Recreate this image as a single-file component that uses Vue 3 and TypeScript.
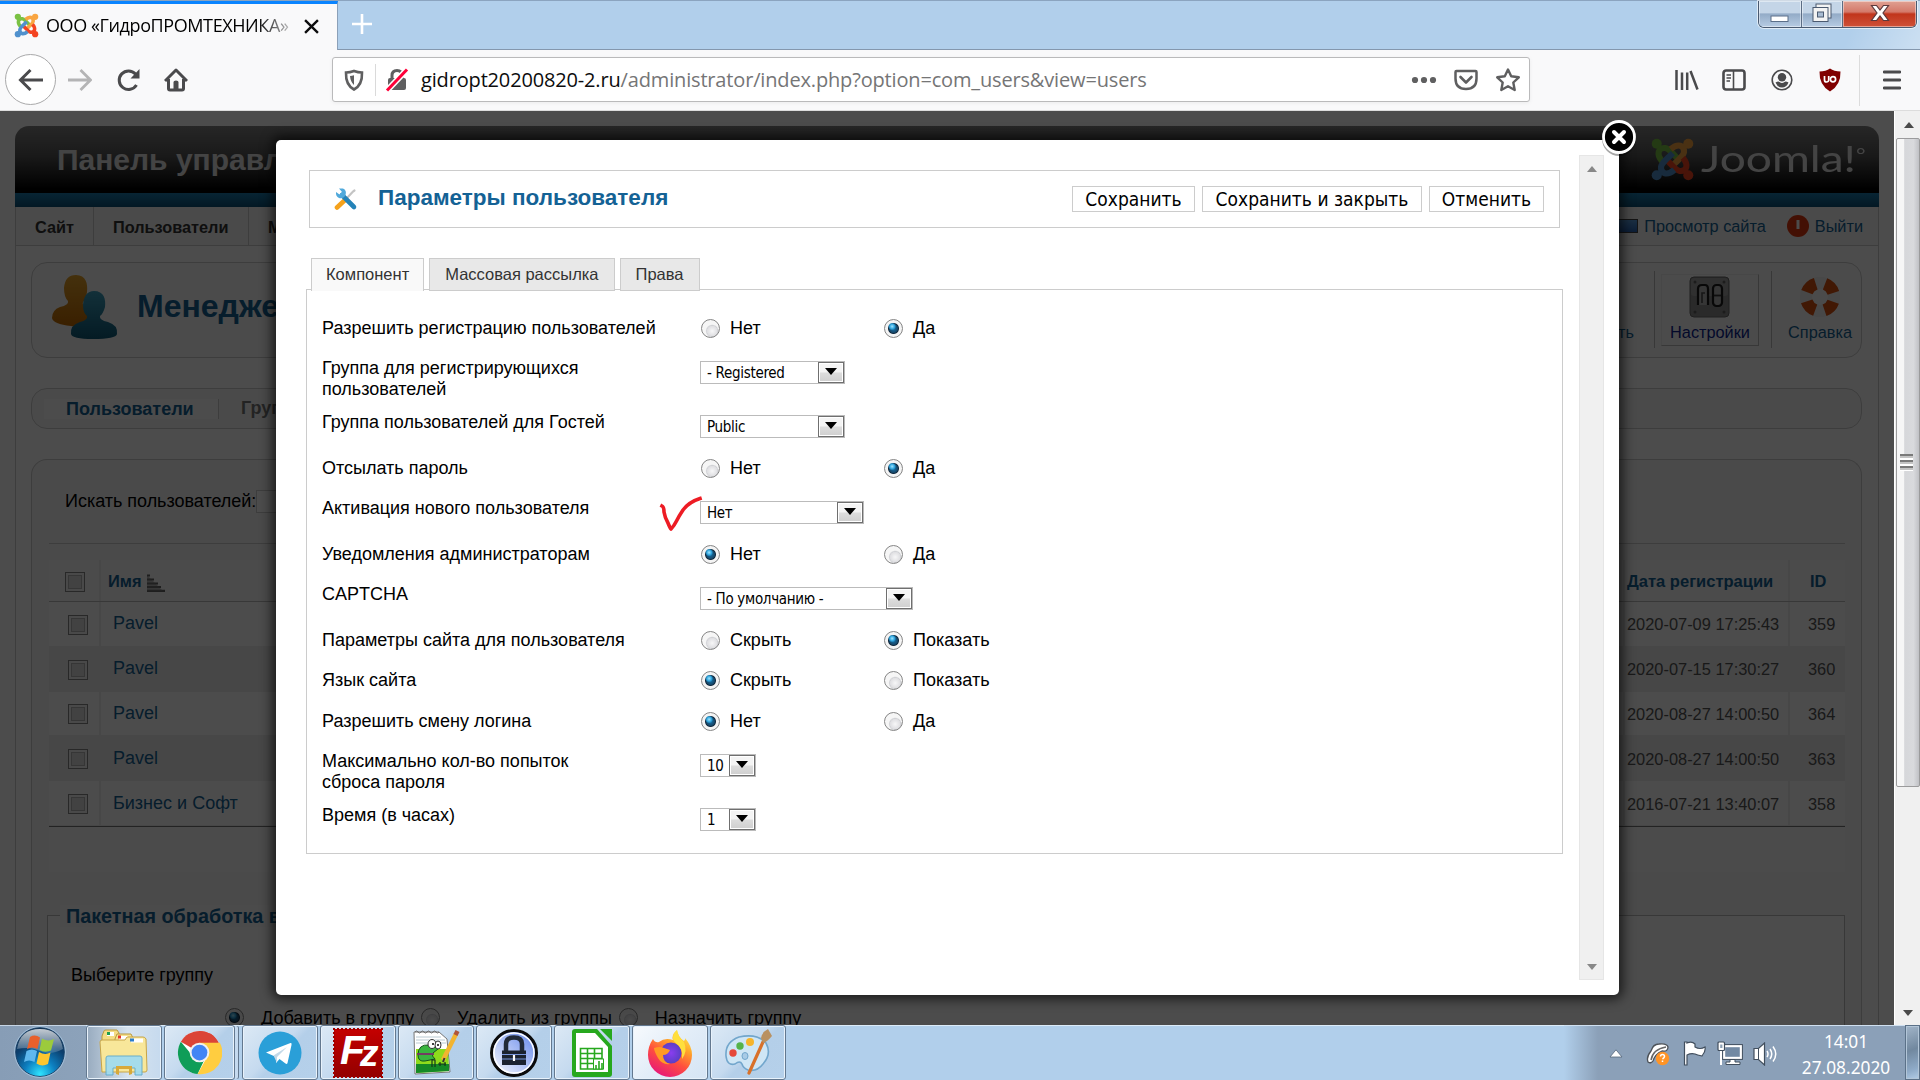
<script setup lang="ts">
interface RadioField { kind: 'radio'; label: string; height: number; options: string[]; checked: number }
interface SelectField { kind: 'select'; label: string; height: number; value: string; width: number; marked?: boolean }
type Field = RadioField | SelectField

const noYes = ['Нет', 'Да']
const hideShow = ['Скрыть', 'Показать']

const fields: Field[] = [
  { kind: 'radio', label: 'Разрешить регистрацию пользователей', height: 40, options: noYes, checked: 1 },
  { kind: 'select', label: 'Группа для регистрирующихся пользователей', height: 54, value: '- Registered', width: 145 },
  { kind: 'select', label: 'Группа пользователей для Гостей', height: 46, value: 'Public', width: 145 },
  { kind: 'radio', label: 'Отсылать пароль', height: 40, options: noYes, checked: 1 },
  { kind: 'select', label: 'Активация нового пользователя', height: 46, value: 'Нет', width: 164, marked: true },
  { kind: 'radio', label: 'Уведомления администраторам', height: 40, options: noYes, checked: 0 },
  { kind: 'select', label: 'CAPTCHA', height: 46, value: '- По умолчанию -', width: 213 },
  { kind: 'radio', label: 'Параметры сайта для пользователя', height: 40, options: hideShow, checked: 1 },
  { kind: 'radio', label: 'Язык сайта', height: 41, options: hideShow, checked: 0 },
  { kind: 'radio', label: 'Разрешить смену логина', height: 40, options: noYes, checked: 0 },
  { kind: 'select', label: 'Максимально кол-во попыток сброса пароля', height: 54, value: '10', width: 56 },
  { kind: 'select', label: 'Время (в часах)', height: 33, value: '1', width: 56 },
]

const users = [
  { name: 'Pavel', date: '2020-07-09 17:25:43', id: 359 },
  { name: 'Pavel', date: '2020-07-15 17:30:27', id: 360 },
  { name: 'Pavel', date: '2020-08-27 14:00:50', id: 364 },
  { name: 'Pavel', date: '2020-08-27 14:00:50', id: 363 },
  { name: 'Бизнес и Софт', date: '2016-07-21 13:40:07', id: 358 },
]

const batch = ['Добавить в группу', 'Удалить из группы', 'Назначить группу']
const tabs = ['Компонент', 'Массовая рассылка', 'Права']
const actions = ['Сохранить', 'Сохранить и закрыть', 'Отменить']
const leaf = 'M6.2 13C2.8 9 4 5.2 8 5.6C10.4 6 12 8.6 15.6 12.2'
const leaves = [
  { color: '#7ac143', turn: 0 },
  { color: '#f9a541', turn: 90 },
  { color: '#f44321', turn: 180 },
  { color: '#5091cd', turn: 270 },
]
</script>

<template>
  <div class="screen">
    <div class="titlebar">
      <div class="browser-tab">
        <svg class="favicon" viewBox="0 0 24 24">
          <g v-for="l in leaves" :key="l.turn" :transform="`rotate(${l.turn} 12 12)`">
            <circle cx="3.7" cy="3.7" r="3" :fill="l.color" />
            <path :d="leaf" fill="none" :stroke="l.color" stroke-width="3.4" />
          </g>
        </svg>
        <span class="tab-title">ООО «ГидроПРОМТЕХНИКА»</span>
        <svg class="tab-close" viewBox="0 0 14 14"><path d="M1 1L13 13M13 1L1 13" stroke="#0c0c0d" stroke-width="2.2" /></svg>
      </div>
      <svg class="new-tab" viewBox="0 0 22 22"><path d="M11 1V21M1 11H21" stroke="#fff" stroke-width="2.6" /></svg>
      <div class="window-buttons">
        <div class="wb min"><svg width="20" height="14" viewBox="0 0 20 14"><rect x="1" y="7" width="17" height="5.5" fill="#fff" stroke="#5b6f89" /></svg></div>
        <div class="wb max"><svg width="22" height="20" viewBox="0 0 22 20"><g fill="#f3f3f3" stroke="#4b5a70"><rect x="5" y="1" width="15" height="14" /><rect x="2" y="4.500" width="15" height="14" /><rect x="6.500" y="9" width="6" height="5" fill="#a9bcd2" /></g></svg></div>
        <div class="wb close"><svg width="20" height="18" viewBox="0 0 20 18"><path d="M1.500 1.500H6.500L10 6L13.500 1.500H18.500L13 9L18.500 16.500H13.500L10 12L6.500 16.500H1.500L7 9Z" fill="#fff" stroke="#5d3a3d" stroke-width="1.200" /></svg></div>
      </div>
    </div>

    <div class="navbar">
      <div class="back"><svg width="26" height="24" viewBox="0 0 26 24"><path d="M25 12H3M12.500 2L2.500 12L12.500 22" fill="none" stroke="#4a4a4c" stroke-width="3" /></svg></div>
      <svg class="nav-icon fwd" viewBox="0 0 24 24"><path d="M0 12H22M12.500 2L22.500 12L12.500 22" fill="none" stroke="#b4b4b5" stroke-width="2.800" /></svg>
      <svg class="nav-icon reload" viewBox="0 0 24 24"><path d="M19.500 17A9.300 9.300 0 1 1 18.500 6L21 9" fill="none" stroke="#4a4a4c" stroke-width="3" /><path d="M22.500 1V10.500H13.500Z" fill="#4a4a4c" /></svg>
      <svg class="nav-icon home" viewBox="0 0 24 24"><path d="M1 13L12 2L23 13M4.500 11V20.500Q4.500 22 6 22H18Q19.500 22 19.500 20.500V11" fill="none" stroke="#4a4a4c" stroke-width="3" stroke-linejoin="round" /><path d="M9.500 21V14Q9.500 12.500 12 12.500T14.500 14V21Z" fill="#4a4a4c" /></svg>
      <div class="urlbar">
        <svg class="shield" width="20" height="22" viewBox="0 0 20 22"><path d="M2 3.500Q6 3.500 10 2Q14 3.500 18 3.500Q18.500 16 10 20.500Q1.500 16 2 3.500Z" fill="none" stroke="#5f5f60" stroke-width="2.600" /><path d="M10 6.200Q8 6.800 6 7Q6.500 13 10 16Z" fill="#5f5f60" /></svg>
        <i class="url-sep"></i>
        <svg class="lock" width="24" height="24" viewBox="0 0 24 24"><rect x="3" y="10" width="18" height="12" rx="2" fill="#5f5f60" /><path d="M7 11V7.500Q7 2.500 12 2.500T17 7.500V11" fill="none" stroke="#5f5f60" stroke-width="3" /><path d="M2 22.500L22 1.500" stroke="#fff" stroke-width="6" /><path d="M2 22.500L22 1.500" stroke="#ff0039" stroke-width="3" /></svg>
        <span class="url"><b>gidropt20200820-2.ru</b>/administrator/index.php?option=com_users&amp;view=users</span>
        <svg class="dots" width="26" height="8" viewBox="0 0 26 8"><g fill="#5f5f60"><circle cx="4" cy="4" r="3.100" /><circle cx="13" cy="4" r="3.100" /><circle cx="22" cy="4" r="3.100" /></g></svg>
        <svg class="pocket" width="26" height="24" viewBox="0 0 26 24"><path d="M3.500 3H22.500Q23.500 3 23.500 4V10.500Q23.500 21 13 21T2.500 10.500V4Q2.500 3 3.500 3Z" fill="none" stroke="#5f5f60" stroke-width="2.500" /><path d="M7.500 9L13 14.500L18.500 9" fill="none" stroke="#5f5f60" stroke-width="2.600" stroke-linecap="round" stroke-linejoin="round" /></svg>
        <svg class="star" width="26" height="26" viewBox="0 0 26 26"><path d="M13 2.500L16.200 9.300L23.800 10.300L18.300 15.500L19.700 23L13 19.300L6.300 23L7.700 15.500L2.200 10.300L9.800 9.300Z" fill="none" stroke="#5f5f60" stroke-width="2.400" stroke-linejoin="round" /></svg>
      </div>
      <div class="tools">
        <svg width="24" height="22" viewBox="0 0 24 22"><path d="M1.500 1V21M7 3.500V21M12.200 3.500V21M15.500 2L22.500 20.500" fill="none" stroke="#4a4a4c" stroke-width="2.500" /></svg>
        <svg class="t-side" width="24" height="22" viewBox="0 0 24 22"><rect x="1.500" y="1.500" width="21" height="19" rx="2.500" fill="none" stroke="#4a4a4c" stroke-width="2.600" /><path d="M11.500 2V20" stroke="#4a4a4c" stroke-width="1.600" /><path d="M4.500 6H9M4.500 9H9M4.500 12H8" stroke="#4a4a4c" stroke-width="1.300" /></svg>
        <svg class="t-acc" width="22" height="22" viewBox="0 0 22 22"><circle cx="11" cy="11" r="9.800" fill="none" stroke="#4a4a4c" stroke-width="1.600" /><circle cx="11" cy="8.200" r="4.200" fill="#4a4a4c" /><path d="M4.500 13.500Q7.500 12 8.500 13Q11 15 13.500 13Q14.500 12 17.500 13.500Q15.500 18.500 11 18.500T4.500 13.500Z" fill="#4a4a4c" /></svg>
        <svg class="t-ubo" width="22" height="24" viewBox="0 0 22 24"><path d="M11 .5Q15 3.500 21.500 3.500Q22 17 11 23.500Q0 17 .5 3.500Q7 3.500 11 .5Z" fill="#800000" /><path d="M5.500 8V12Q5.500 14 7.500 14T9.700 12V8" fill="none" stroke="#fff" stroke-width="1.700" /><circle cx="14" cy="11.300" r="2.600" fill="none" stroke="#fff" stroke-width="1.700" /></svg>
        <i class="tool-sep"></i>
        <svg class="t-menu" width="18" height="20" viewBox="0 0 18 20"><path d="M1 2H17M1 10H17M1 18H17" stroke="#4a4a4c" stroke-width="2.800" stroke-linecap="round" /></svg>
      </div>
    </div>

    <div class="viewport">
      <div class="page">
        <div class="masthead">
          <span class="mast-title">Панель управления</span>
          <svg class="jicon" viewBox="0 0 24 24">
            <g v-for="l in leaves" :key="l.turn" :transform="`rotate(${l.turn} 12 12)`">
              <circle cx="3.200" cy="3.200" r="2.800" :fill="l.color" />
              <path :d="leaf" fill="none" :stroke="l.color" stroke-width="3.400" />
            </g>
          </svg>
          <span class="jword">Joomla!<sup>°</sup></span>
        </div>
        <div class="blueline"></div>
        <div class="menubar">
          <span class="mi first">Сайт</span><span class="mi second">Пользователи</span><span class="mi third">Материалы</span>
          <div class="status">
            <i class="monitor"></i><span class="preview">Просмотр сайта</span>
            <svg width="22" height="22" viewBox="0 0 22 22"><circle cx="11" cy="11" r="11" fill="#e2380f" /><path d="M11 5V14" stroke="#fff" stroke-width="3" /></svg>
            <span>Выйти</span>
          </div>
        </div>
        <div class="body">
          <div class="box toolbar">
            <svg class="people" width="68" height="66" viewBox="0 0 68 66">
              <defs>
                <linearGradient id="gold" x2="0" y2="1"><stop offset="0" stop-color="#e4a32c" /><stop offset="1" stop-color="#c06800" /></linearGradient>
                <linearGradient id="teal" x2="0" y2="1"><stop offset="0" stop-color="#3fa2c0" /><stop offset="1" stop-color="#0e5a78" /></linearGradient>
              </defs>
              <path d="M25 1C35 1 37 10 36 18Q35 26 32 28Q30 33 40 36Q50 39 49 50Q38 56 20 52Q2 50 1 44Q1 36 9 33Q18 31 17 27Q13 23 13 14Q14 1 25 1Z" fill="url(#gold)" />
              <path d="M43 17C53 17 55 25 54 33Q52 40 49 42Q48 46 57 48Q67 51 66 60Q65 65 42 65Q21 65 20 60Q19 51 29 48Q37 46 36 42Q32 39 32 31Q33 17 43 17Z" fill="url(#teal)" />
            </svg>
            <span class="page-title">Менеджер</span>
            <div class="tb-right">
              <span class="tb-cut">Удалить</span>
              <i class="tb-sep s1"></i>
              <div class="tb-item hover">
                <svg width="42" height="42" viewBox="0 0 42 42"><rect x="1" y="1" width="39" height="40" rx="4" fill="#8d8d8d" stroke="#6a6a6a" /><rect x="2" y="2" width="37" height="18" rx="3" fill="#a0a0a0" /><g fill="#606060"><circle cx="6" cy="6" r="1.500" /><circle cx="35" cy="6" r="1.500" /><circle cx="6" cy="36" r="1.500" /><circle cx="35" cy="36" r="1.500" /></g><path d="M9 29V13Q9 9 13 9H16Q19 9 19 13V29" fill="#b4b4b4" stroke="#1c1c1c" stroke-width="2.200" /><path d="M13 27V17H16" fill="none" stroke="#4a4a4a" stroke-width="1.600" /><rect x="24" y="9" width="9" height="21" rx="3.500" fill="#b4b4b4" stroke="#1c1c1c" stroke-width="2.200" /><path d="M25 19.500H32" stroke="#333" stroke-width="1.800" /></svg>
                <span class="active-link">Настройки</span>
              </div>
              <i class="tb-sep s2"></i>
              <div class="tb-item help">
                <svg width="42" height="42" viewBox="0 0 42 42"><circle cx="21" cy="21" r="14" fill="none" stroke="#f0f0f0" stroke-width="12" /><circle cx="21" cy="21" r="14" fill="none" stroke="#d9500f" stroke-width="12" stroke-dasharray="12.500 9.490" transform="rotate(19.500 21 21)" /></svg>
                <span>Справка</span>
              </div>
            </div>
          </div>
          <div class="box submenu"><span class="sub-active">Пользователи</span><span class="sub">Группы</span></div>
          <div class="box content">
            <div class="search"><span>Искать пользователей:</span><i></i></div>
            <div class="rule"></div>
            <div class="table">
              <div class="tr th">
                <div class="c0"><i class="cb"></i></div>
                <div class="c1">Имя<svg width="19" height="18" viewBox="0 0 19 18"><path d="M1 1.500H4M1 5.500H8M1 9.500H12M1 13H15M1 16.800H19" stroke="#666" stroke-width="2.200" /><path d="M1 1L17 17H1Z" fill="#777" opacity=".5" /></svg></div>
                <div class="c2">Дата регистрации</div><div class="c3">ID</div>
              </div>
              <div v-for="(u, n) in users" :key="u.id" class="tr" :class="{ alt: n % 2 }">
                <div class="c0"><i class="cb"></i></div><div class="c1">{{ u.name }}</div>
                <div class="c2">{{ u.date }}</div><div class="c3">{{ u.id }}</div>
              </div>
              <div class="tfoot"></div>
            </div>
            <div class="fieldset">
              <span class="legend">Пакетная обработка выбранных</span>
              <div class="choose">Выберите группу</div>
              <div class="batch">
                <template v-for="(b, n) in batch" :key="b"><i class="radio" :class="{ on: n === 0 }"></i><span>{{ b }}</span></template>
              </div>
            </div>
          </div>
        </div>
      </div>
      <div class="shade"></div>

      <div class="scroll">
        <i class="arrow up"></i>
        <div class="thumb"><i class="grip"></i></div>
        <i class="arrow down"></i>
      </div>

      <div class="modal">
        <div class="frame">
          <div class="head">
            <svg width="24" height="24" viewBox="0 0 24 24"><path d="M3 20.500L11 13" stroke="#f5a21c" stroke-width="4.600" stroke-linecap="round" /><path d="M13 11L19 4.500L20.500 3.500" stroke="#c4c4c4" stroke-width="2.200" stroke-linecap="round" /><path d="M8 8L20 20" stroke="#2583b8" stroke-width="4.600" stroke-linecap="round" /><path d="M5 1.500L8 5L5.500 7.500L2 5Q1.500 9.500 5 11Q9.500 12 11.500 8Q13 3 9 1.500Z" fill="#50a9db" /></svg>
            <h1>Параметры пользователя</h1>
            <div class="actions"><button v-for="a in actions" :key="a">{{ a }}</button></div>
          </div>
          <div class="tabs"><span v-for="(t, n) in tabs" :key="t" class="tab" :class="{ current: n === 0 }">{{ t }}</span></div>
          <div class="panel">
            <div v-for="f in fields" :key="f.label" class="row" :style="{ height: f.height + 'px' }">
              <div class="label">{{ f.label }}</div>
              <template v-if="f.kind === 'radio'">
                <label v-for="(o, n) in f.options" :key="o" class="opt"><i class="radio" :class="{ on: n === f.checked }"></i>{{ o }}</label>
              </template>
              <div v-else class="select" :style="{ width: f.width + 'px' }">
                <span>{{ f.value }}</span><i class="drop"></i>
                <svg v-if="f.marked" class="mark" width="46" height="38" viewBox="0 0 46 38"><path d="M4 10Q6 11 6 16Q7 22 10 27Q12 32 13 33Q16 30 18.500 25Q21 20 25 14Q31 6 42 2.500" fill="none" stroke="#ed1c24" stroke-width="3.600" stroke-linecap="square" stroke-linejoin="round" /></svg>
              </div>
            </div>
          </div>
        </div>
        <div class="inner-scroll"><i class="arrow up"></i><i class="arrow down"></i></div>
        <svg class="modal-close" width="40" height="42" viewBox="0 0 40 42"><circle cx="20" cy="22" r="17" fill="#000" opacity=".35" /><circle cx="20" cy="20" r="15.500" fill="#000" stroke="#fff" stroke-width="2.800" /><path d="M15 15L25 25M25 15L15 25" stroke="#fff" stroke-width="4" stroke-linecap="round" /></svg>
      </div>
    </div>

    <div class="taskbar">
      <div class="start">
        <svg width="52" height="52" viewBox="0 0 52 52">
          <defs>
            <radialGradient id="orb" cx=".5" cy=".95" r=".9"><stop offset="0" stop-color="#2fe4ff" /><stop offset=".35" stop-color="#0d7fc0" /><stop offset=".7" stop-color="#0c3f6e" /><stop offset="1" stop-color="#123150" /></radialGradient>
            <linearGradient id="gloss" x2="0" y2="1"><stop offset="0" stop-color="#fff" stop-opacity=".75" /><stop offset="1" stop-color="#fff" stop-opacity=".15" /></linearGradient>
          </defs>
          <circle cx="26" cy="26" r="24.500" fill="url(#orb)" stroke="#20466b" /><circle cx="26" cy="26" r="25.400" fill="none" stroke="#a9c8e2" stroke-width=".8" />
          <path d="M3 23Q6 3 26 3T49 23Q36 30 26 25T3 23Z" fill="url(#gloss)" />
          <path d="M16 11Q21 8 26 11.500L23.500 23Q18 20 13 23Z" fill="#e8602c" /><path d="M28 12.500Q34 16 40 13L37 24.500Q31 27 25.500 24Z" fill="#9ccb3c" /><path d="M12.500 25Q18 22 23 25L20.500 36Q15 33 10 36Z" fill="#5fb8ee" /><path d="M25 26Q31 29.500 36.500 26.500L34 38Q28 41 22.500 37.500Z" fill="#fdc62e" />
        </svg>
      </div>
      <div class="tasks">
        <div class="task">
          <svg width="50" height="50" viewBox="0 0 50 50">
            <path d="M3 8L5 3Q5 2 7 2H18L20 5V20H3Z" fill="#f4dc83" stroke="#b9983e" /><path d="M16 11L18 6H32L34 10V20H16Z" fill="#f7e28f" stroke="#b9983e" /><rect x="8" y="4" width="7" height="4" fill="#fff" /><rect x="8" y="4" width="3" height="3" fill="#1d9f50" /><rect x="20" y="8" width="9" height="4" fill="#fff" /><rect x="19" y="7.500" width="3" height="3" fill="#e53727" /><path d="M1 14Q1 12 3 12H26L28 9H44Q46 9 47 11L48 42Q48 44 46 44H3Z" fill="#f8e79a" stroke="#c7a548" /><rect x="32" y="10.500" width="12" height="4" fill="#fff" /><rect x="31" y="10.500" width="4" height="3" fill="#2a7ccc" />
            <path d="M7 47V30Q7 28 9 28H41Q43 28 43 30V47H36V40H14V47Z" fill="#9fdcf2" stroke="#5fa9cc" opacity=".92" /><path d="M17 46V38H33V46L30 47V41H20V47Z" fill="#d8a93a" />
          </svg>
        </div>
        <div class="task stacked">
          <svg width="45" height="45" viewBox="0 0 48 48"><circle cx="24" cy="24" r="23" fill="#fff" /><path d="M24 24L4.100 12.500A23 23 0 0 1 43.900 12.500Z" fill="#db4437" /><path d="M24 1A23 23 0 0 1 43.900 12.500L45.700 16H24Z" fill="#db4437" /><path d="M4.100 12.500A23 23 0 0 0 22 47L31 28H17Z" fill="#0f9d58" /><path d="M24 13.500H45.700A23 23 0 0 1 22 47L32.500 28Z" fill="#ffcd40" /><circle cx="24" cy="24" r="10.500" fill="#f1f1f1" /><circle cx="24" cy="24" r="8.400" fill="#4285f4" /></svg>
        </div>
        <div class="task"><svg width="44" height="44" viewBox="0 0 44 44"><circle cx="22" cy="22" r="21.500" fill="#2a9fd8" /><path d="M8 21.500L32.500 12Q34 11.500 33.500 14L29.500 32Q29 33.500 27.500 32.500L21.500 28L18 32V26Z" fill="#fff" /><path d="M15.500 24.500L29 16L19 26V32Z" fill="#c3d9e8" /></svg></div>
        <div class="task"><div class="fz"><span>F</span><span class="z">z</span></div></div>
        <div class="task">
          <svg width="50" height="48" viewBox="0 0 50 48"><path d="M3 3H28L36 10L39 43L4 45Z" fill="#fff" stroke="#777" /><path d="M4 3Q5.500 1 7 3T10 3T13 3T16 3T19 3T22 3T25 3T28 3" fill="none" stroke="#666" /><path d="M5 8H30M5 11H34M5 14H35" stroke="#b9cad3" /><path d="M5 20H37L38 42L5 44Z" fill="#8edb1c" /><path d="M5 35H38L38 42L5 44Z" fill="#158926" /><path d="M7 26Q7 15 18 16Q24 13 27 20L22 24Q20 27 24 30L14 32Q7 33 7 26Z" fill="#39b53f" stroke="#14551c" /><ellipse cx="21" cy="15" rx="4" ry="4.500" fill="#fff" stroke="#333" /><ellipse cx="27" cy="16" rx="3" ry="4" fill="#fff" stroke="#333" /><circle cx="22" cy="15" r="1" /><circle cx="27" cy="16" r="1" /><path d="M6 25H23" stroke="#743d62" stroke-width="2" /><path d="M21 38V31H24V38M27 35H35M29 33V37M34 33V37" stroke="#16351a" stroke-width="1.200" fill="none" /><path d="M32 31L45 5" stroke="#f2b430" stroke-width="4.500" /><path d="M44.500 6L46.500 2" stroke="#b0553a" stroke-width="4.500" /><path d="M33.500 29L32 33" stroke="#333" stroke-width="2" /></svg>
        </div>
        <div class="task">
          <svg width="50" height="50" viewBox="0 0 50 50"><defs><linearGradient id="kp" x1="0" y1="1" x2="1" y2="0"><stop offset="0" stop-color="#fff" /><stop offset="1" stop-color="#5d82ea" /></linearGradient></defs><circle cx="25" cy="25" r="22.500" fill="url(#kp)" stroke="#0b0b0b" stroke-width="3" /><circle cx="25" cy="25" r="20" fill="none" stroke="#fff" stroke-width="1.400" /><path d="M17 23V16Q17 9.500 25 9.500T33 16V23" fill="none" stroke="#222a38" stroke-width="4.500" /><path d="M13 22.500H37V37H13Z" fill="#1b2230" /><path d="M13 26.500H37M13 31H37" stroke="#7895dd" stroke-width="1.200" /><path d="M25 27V33" stroke="#fff" stroke-width="2.200" /></svg>
        </div>
        <div class="task">
          <svg width="42" height="50" viewBox="0 0 42 50"><path d="M4 1H26L41 18V46Q41 49 38 49H4Q1 49 1 46V4Q1 1 4 1Z" fill="#27a81e" /><path d="M5 5H24L37 19V44H5Z" fill="#fff" /><path d="M29 1H41V13Z" fill="#27a81e" /><path d="M9.500 20.500H31V41H9.500ZM9.500 25.500H31M9.500 30.500H31M9.500 35.500H31M16.500 20.500V41M23.500 20.500V41" fill="none" stroke="#27a81e" stroke-width="1.600" /><rect x="22.500" y="31" width="10" height="10" fill="#fff" stroke="#27a81e" /><path d="M25 41V37M28 41V33M31 41V35" stroke="#27a81e" stroke-width="1.600" /></svg>
        </div>
        <div class="task focus">
          <svg width="48" height="48" viewBox="0 0 48 48"><defs><linearGradient id="ff" x1=".8" y1="0" x2=".25" y2="1"><stop offset="0" stop-color="#fff14f" /><stop offset=".3" stop-color="#ffa52a" /><stop offset=".6" stop-color="#ff4f3e" /><stop offset="1" stop-color="#e5147d" /></linearGradient><radialGradient id="fp"><stop offset="0" stop-color="#8a3df0" /><stop offset="1" stop-color="#5a3fc4" /></radialGradient></defs><path d="M7 10Q9 14 13 13Q19 8 27 11Q25 6 31 1Q32 8 38 12Q40 10 39 9Q46 17 46 26A22 22 0 0 1 2 26Q2 17 7 10Z" fill="url(#ff)" /><circle cx="25" cy="24" r="10.500" fill="url(#fp)" /><path d="M8 19Q14 17 18 19L24 21Q22 26 17 26Q17 33 24 35Q16 36 12 29T8 19Z" fill="#ff9a24" /><path d="M31 1Q32 8 38 13Q42 22 36 30Q37 20 32 16Q26 11 27 9Q27 4 31 1Z" fill="#ffdf3c" /></svg>
        </div>
        <div class="task">
          <svg width="50" height="50" viewBox="0 0 50 50"><path d="M3 28Q2 14 16 9Q34 5 43 15Q49 26 40 36Q34 44 25 42Q20 40 19 36Q17 32 12 36Q4 38 3 28Z" fill="#cfe6f5" stroke="#72a6cc" stroke-width="1.600" /><ellipse cx="22" cy="28" rx="3" ry="3.500" fill="#a8cbe6" stroke="#72a6cc" /><circle cx="10" cy="25" r="3.700" fill="#e5483a" /><circle cx="17" cy="18" r="3.700" fill="#56b34a" /><circle cx="27" cy="14" r="4" fill="#f6b42b" /><path d="M26 45L40 14" stroke="#d8712a" stroke-width="3.200" stroke-linecap="round" /><path d="M38 10Q39 4 45 1L49 8Q44 14 40 15Z" fill="#b99162" /></svg>
        </div>
      </div>
      <div class="tray">
        <svg class="tr-up" width="14" height="9" viewBox="0 0 14 9"><path d="M7 .8L13 8H1Z" fill="#fff" stroke="#53657a" stroke-width=".8" /></svg>
        <svg class="tr-a" width="24" height="24" viewBox="0 0 24 24"><path d="M2 20Q0 15 5 9Q7 2 13 2Q21 1 22 5Q22 10 16 9Q9 12 7 19Q5 22 2 20Z" fill="#fff" stroke="#4d5258" stroke-width="1.300" /><path d="M5 18Q7 7 20 5" stroke="#666" fill="none" stroke-width="1.500" /><circle cx="16.500" cy="16.500" r="6.700" fill="#ff9426" /><path d="M14.500 14.500Q14.500 12.500 16.500 12.500T18.500 14.500Q18.500 15.700 16.500 17M16.500 18.500V20" fill="none" stroke="#fff" stroke-width="1.500" /></svg>
        <svg class="tr-b" width="24" height="25" viewBox="0 0 24 25"><path d="M4 2Q9 0 12 3V6Q17 9 22 6Q23 10 19 15Q14 14 12 13Q8 12 4 14V24H1.500V1H4Z" fill="#fff" stroke="#414e5d" stroke-width="1.200" /></svg>
        <svg class="tr-c" width="26" height="25" viewBox="0 0 26 25"><rect x="7" y="5" width="17" height="12" fill="#7289a3" stroke="#fff" stroke-width="2.400" /><rect x="5.600" y="3.600" width="19.800" height="14.800" fill="none" stroke="#414e5d" /><path d="M13 18.500V21H9V23.500H23V21H18V18.500Z" fill="#fff" stroke="#414e5d" /><path d="M4 8V24" stroke="#fff" stroke-width="2" /><rect x="1" y="1" width="6.500" height="8.500" rx="1" fill="#fff" stroke="#414e5d" stroke-width="1.200" /><rect x="3.200" y="3.500" width="2.200" height="3.500" fill="#8da1b5" /></svg>
        <svg class="tr-d" width="25" height="24" viewBox="0 0 25 24"><path d="M1 6.500H5.500L11.500 1V23L5.500 17.500H1Z" fill="#fff" stroke="#414e5d" stroke-width="1.200" /><path d="M5.500 6.500V17.500" stroke="#414e5d" /><path d="M14 9Q16 12 14 15M17 7Q20.500 12 17 17M20 4.500Q25.500 12 20 19.500" fill="none" stroke="#fff" stroke-width="1.500" /></svg>
        <div class="clock"><span>14:01</span><span>27.08.2020</span></div>
        <i class="show-desktop"></i>
      </div>
    </div>
  </div>
</template>

<style>
body { margin: 0; overflow: hidden; }
</style>

<style scoped>
* { box-sizing: border-box; }
svg { display: block; flex: none; }
i { display: block; flex: none; }
.screen { width: 1920px; height: 1080px; display: flex; flex-direction: column; overflow: hidden; font-family: "Liberation Sans", Arial, sans-serif; color: #000; }

.titlebar { height: 50px; flex: none; display: flex; background: linear-gradient(115deg, transparent 96%, rgba(255,255,255,.35) 100%), #b1cfeb; border-bottom: 1px solid #8497ad; border-top: 1px solid #8ba4bf; }
.browser-tab { width: 338px; height: 49px; background: #f9f9fa; border-top: 3px solid #0a84ff; border-right: 1px solid #8ba0b8; display: flex; align-items: center; padding-left: 14px; }
.favicon { width: 25px; height: 25px; margin-top: -3px; }
.tab-title { margin-left: 7px; width: 246px; overflow: hidden; white-space: nowrap; font: 18px/28px "Open Sans", sans-serif; letter-spacing: -.4px; margin-top: -4px; -webkit-mask-image: linear-gradient(90deg, #000 86%, rgba(0,0,0,.3) 98%); mask-image: linear-gradient(90deg, #000 86%, rgba(0,0,0,.3) 98%); }
.tab-close { width: 15px; height: 15px; margin-left: 12px; margin-top: -2px; }
.new-tab { width: 22px; height: 22px; margin: 12px 0 0 13px; }
.window-buttons { margin-left: auto; margin-right: 3px; display: flex; width: 159px; height: 27px; border: 1px solid #4a5a70; border-top: 0; border-radius: 0 0 6px 6px; overflow: hidden; box-shadow: 0 0 0 1px rgba(255,255,255,.6); }
.wb { display: flex; align-items: center; justify-content: center; padding-bottom: 2px; background: linear-gradient(#c4d5e7 45%, #93abc7 50%, #b7cce3); border-right: 1px solid #5c6d84; box-shadow: inset 0 0 0 1px rgba(255,255,255,.45); }
.min { width: 43px; padding-top: 6px; }
.max { width: 41px; }
.close { flex: 1; border: 0; background: linear-gradient(#e0a193 0, #d4796a 42%, #c1351c 50%, #cf5138); }

.navbar { height: 61px; flex: none; background: #f9f9fa; border-bottom: 1px solid #dcdcdc; display: flex; align-items: center; }
.back { width: 51px; height: 51px; margin-left: 5px; margin-top: -1px; border: 1px solid #a9a9aa; border-radius: 50%; background: #fff; display: flex; align-items: center; justify-content: center; }
.nav-icon { width: 24px; height: 24px; }
.fwd { margin-left: 12px; }
.reload { margin-left: 25px; }
.home { margin-left: 23px; }
.urlbar { margin-left: 144px; margin-top: -1px; width: 1198px; height: 45px; background: #fff; border: 1px solid #bababb; border-radius: 3px; box-shadow: 0 1px 4px rgba(0,0,0,.06); display: flex; align-items: center; }
.shield { margin-left: 11px; }
.url-sep { width: 1px; height: 32px; background: #dadada; margin-left: 11px; }
.lock { margin-left: 9px; }
.url { margin-left: 12px; margin-top: 1px; font: 20px/30px "Open Sans", sans-serif; letter-spacing: -.16px; color: #757576; white-space: nowrap; width: 985px; }
.url b { font-weight: 400; color: #0c0c0d; }
.dots { margin-left: 5px; }
.pocket { margin-left: 16px; }
.star { margin-left: 16px; }
.tools { margin-left: auto; display: flex; align-items: center; height: 52px; margin-right: 19px; }
.t-side { margin-left: 23px; }
.t-acc { margin-left: 25px; }
.t-ubo { margin-left: 26px; }
.tool-sep { width: 1px; height: 51px; margin-left: 18px; background: #dcdcdc; }
.t-menu { margin-left: 23px; }

.viewport { height: 914px; flex: none; position: relative; overflow: hidden; display: flex; background: #fff; }
.page { width: 1894px; height: 914px; padding: 15px 15px 0; overflow: hidden; }
.shade { position: absolute; left: 0; top: 0; width: 1894px; height: 914px; background: rgba(0,0,0,.7); }
.masthead { height: 67px; border-radius: 14px 14px 0 0; background: linear-gradient(#828282, #555 45%, #000 95%); display: flex; align-items: center; color: #e4e4e4; }
.mast-title { margin-left: 42px; font-size: 30px; line-height: 34px; font-weight: 700; width: 1550px; }
.jicon { width: 43px; height: 43px; margin-left: 44px; }
.jword { font: 400 36px/50px Lato, sans-serif; margin-left: 7px; margin-top: -4px; white-space: nowrap; transform: scaleX(1.28); transform-origin: 0 50%; }
.jword sup { font-size: 18px; line-height: 0; vertical-align: 11px; }
.blueline { height: 14px; background: linear-gradient(#1c7cae, #0b5178); }
.menubar { height: 39px; border: 1px solid #ccc; border-width: 0 1px 1px; background: #f7f7f7; display: flex; font-size: 16.3px; font-weight: 700; line-height: 40px; color: #333; }
.mi { border-right: 1px solid #ccc; padding-left: 19px; }
.first { width: 78px; }
.second { width: 155px; }
.third { border: 0; }
.status { margin-left: auto; display: flex; align-items: center; font-weight: 400; color: #146295; padding-right: 15px; height: 37px; }
.status svg { margin: 0 6px 0 21px; }
.monitor { width: 22px; height: 14px; background: linear-gradient(#5a9ee0, #2a65b5); border: 1px solid #444; margin-right: 6px; }
.body { border: 1px solid #ccc; border-width: 0 1px; background: #fff; padding: 16px 16px 0 15px; height: 900px; }
.box { border: 1px solid #ccc; border-radius: 16px; background: #fbfbfb; }
.toolbar { height: 96px; display: flex; }
.people { margin: 11px 0 0 19px; }
.page-title { font-size: 32px; line-height: 38px; font-weight: 700; color: #146295; margin: 24px 0 0 18px; }
.tb-right { margin-left: auto; display: flex; margin-top: 8px; color: #146295; font-size: 16.300px; }
.tb-cut { margin-top: 51px; line-height: 20px; }
.tb-sep { width: 1px; height: 77px; background: #bbb; }
.s1 { margin-left: 20px; }
.s2 { margin-left: 12px; }
.tb-item { display: flex; flex-direction: column; align-items: center; line-height: 20px; height: 72px; margin-top: 3px; padding-top: 2px; }
.tb-item svg { margin-bottom: 4px; }
.hover { width: 98px; margin-left: 6px; border: 1px solid #eee; border-right-color: #bbb; border-bottom-color: #bbb; padding-top: 1px; }
.active-link { color: #0a1f8f; }
.help { width: 96px; margin-right: -7px; }
.submenu { height: 41px; margin-top: 30px; display: flex; align-items: center; font-size: 18px; font-weight: 700; background: #f9f9f9; }
.sub-active { margin-left: 12px; width: 175px; height: 20px; line-height: 20px; padding-left: 22px; background: #fff; border-right: 1px solid #ccc; color: #146295; }
.sub { margin-left: 22px; color: #777; }
.content { margin-top: 30px; height: 700px; border-radius: 16px 16px 0 0; background: #f8f8f8; border-bottom: 0; padding: 30px 16px 0 17px; }
.search { display: flex; align-items: center; height: 23px; padding-left: 16px; font-size: 18px; letter-spacing: -.02px; white-space: nowrap; }
.search i { width: 200px; height: 23px; border: 1px solid #ccc; background: #fff; }
.rule { height: 1px; background: #ccc; margin-top: 30px; }
.table { margin-top: 16px; width: 1796px; }
.tr { height: 44.800px; display: flex; background: #fff; color: #555; font-size: 16.400px; border-bottom: 1px solid #ededed; }
.tr.alt { background: #eee; }
.tr > div { display: flex; align-items: center; padding-top: 2px; }
.tr .c0 { width: 52px; border-right: 2px solid #eee; padding-left: 19px; }
.tr .c1 { flex: 1; border-right: 2px solid #eee; color: #146295; padding: 0 0 0 12px; font-size: 18px; }
.tr .c2 { width: 165px; padding-left: 2px; border-right: 2px solid #eee; }
.tr .c3 { width: 55px; padding-left: 18px; }
.th { height: 42px; background: #fbfbfb; border-bottom: 1px solid #bbb; font-weight: 700; color: #146295; }
.th .c0 { padding-left: 16px; }
.th .c1 { padding: 1px 0 0 7px; font-size: 16.400px; }
.th .c1 svg { margin: 3px 0 0 5px; }
.th .c2 { font-size: 16.550px; }
.th .c3 { padding-left: 20px; }
.cb { width: 20px; height: 20px; background: #dcdcdc; border: 1px solid #888; box-shadow: inset 0 0 0 2px #f4f4f4, inset 0 0 0 3px #b5b5b5; }
.tfoot { height: 46px; border-top: 1px solid #777; background: #fafafa; }
.fieldset { margin: 43px 0 0 -2px; width: 1798px; height: 200px; border: 1px solid #bbb; background: #fff; }
.legend { display: block; width: 300px; margin: -11px 0 0 12px; padding-left: 6px; background: #fafafa; font-size: 19.800px; font-weight: 700; line-height: 22px; color: #146295; white-space: nowrap; }
.choose { margin: 37px 0 0 23px; font-size: 18px; line-height: 22px; }
.batch { display: flex; align-items: center; margin: 20px 0 0 177px; font-size: 18px; line-height: 24px; white-space: nowrap; }
.batch span { margin: 0 7px 0 17px; }

.radio { width: 19px; height: 19px; border: 1px solid #858585; border-radius: 50%; background: radial-gradient(circle at 60% 65%, #f7f7f8 0, #dfdfe2 5px, #cfd0d4 5.500px, #f6f6f6 6.800px, #f6f6f6 8px); }
.radio.on { background: radial-gradient(circle at 42% 38%, #9fe4ff 0, #2da3dc 2.500px, transparent 4px), radial-gradient(circle at 50% 50%, #1673ab 0, #16496c 4px, #122b40 5px, #f4f4f4 6px, #f4f4f4 8px); }

.scroll { width: 26px; background: #f0f0f0; border-left: 1px solid #fff; display: flex; flex-direction: column; align-items: center; position: relative; }
.arrow { width: 0; height: 0; border: 5.500px solid transparent; }
.arrow.up { border-top: 0; border-bottom: 6px solid #4a4a4a; }
.arrow.down { border-bottom: 0; border-top: 6px solid #4a4a4a; }
.scroll .up { margin: 11px 0 10px 2px; }
.thumb { width: 24px; height: 649px; background: linear-gradient(90deg, #f6f6f6 30%, #d6d7da 35%, #d9dadd 75%, #c0c1c5); border: 1px solid #9b9b9c; border-radius: 2px; display: flex; align-items: center; justify-content: center; }
.grip { width: 13px; height: 17px; margin-right: 2px; background: repeating-linear-gradient(#7a7a7a 0 1.500px, #c4c4c4 2px 4px, #fff 4.500px 6px); }
.scroll .down { margin: auto 0 9px 1px; }

.modal { position: absolute; left: 276px; top: 29px; width: 1343px; height: 855px; background: #fff; border-radius: 5px; box-shadow: 0 0 12px 4px rgba(0,0,0,.65); display: flex; justify-content: space-between; padding: 15px 15px 15px 30px; }
.frame { width: 1257px; padding-top: 15px; }
.head { margin-left: 3px; width: 1251px; height: 58px; border: 1px solid #ccc; display: flex; padding: 15px 15px 0 24px; }
.head svg { margin-top: 1px; }
.head h1 { margin: -1px 0 0 20px; font-size: 22.500px; line-height: 26px; font-weight: 700; color: #146295; white-space: nowrap; }
.actions { margin-left: auto; display: flex; gap: 7px; }
.actions button { height: 26px; padding: 0; border: 1px solid #ccc; background: #fff; font: 19px/24px "DejaVu Sans Condensed", "DejaVu Sans", sans-serif; font-stretch: condensed; letter-spacing: .02px; color: #000; white-space: nowrap; }
.actions button:nth-child(1) { width: 123px; }
.actions button:nth-child(2) { width: 220px; }
.actions button:nth-child(3) { width: 115px; }
.tabs { margin-top: 30px; padding-left: 5px; display: flex; gap: 5px; height: 33px; margin-bottom: -2px; position: relative; }
.tab { border: 1px solid #ccc; background: #e8e8e8; font-size: 16.500px; line-height: 30px; color: #333; padding: 0 15px; white-space: nowrap; }
.tab.current { background: #f9f9f9; border-bottom: 0; padding: 0 14px; }
.panel { width: 1257px; height: 565px; border: 1px solid #ccc; padding: 27px 0 0 15px; }
.row { display: flex; align-items: flex-start; }
.label { width: 378px; padding-right: 80px; padding-top: 1px; flex: none; font-size: 18px; line-height: 21px; }
.row:first-child .label { padding-right: 0; }
.row:nth-child(8) .label { padding-right: 0; }
.opt { width: 183px; height: 21px; margin-top: 1px; display: flex; align-items: center; gap: 10px; font-size: 18px; line-height: 21px; padding-left: 1px; }
.opt .radio { margin-top: -1px; }
.select { margin-top: 4px; height: 23px; border: 1px solid #bbb; display: flex; align-items: center; justify-content: space-between; padding-left: 6px; font: 15px/20px "DejaVu Sans Condensed", "DejaVu Sans", sans-serif; font-stretch: condensed; letter-spacing: -.3px; position: relative; white-space: nowrap; }
.drop { width: 26px; height: 21px; border: 1px solid #6f6f6f; background: linear-gradient(#f4f4f4 45%, #dcdcdc 55%, #cfcfcf); box-shadow: inset 0 0 0 1px #fff; display: flex; align-items: center; justify-content: center; }
.drop::before { content: ""; border: 6px solid transparent; border-top: 7px solid #000; border-bottom: 0; margin-top: -2px; }
.mark { position: absolute; left: -43px; top: -6px; }
.inner-scroll { width: 25px; background: #f0f0f0; border: 1px solid #e6e6e6; display: flex; flex-direction: column; align-items: center; justify-content: space-between; padding: 10px 0 9px; }
.inner-scroll .arrow.up { border-bottom-color: #888; }
.inner-scroll .arrow.down { border-top-color: #888; }
.modal-close { position: absolute; right: -20px; top: -23px; }

.taskbar { height: 55px; flex: none; display: flex; background: #b1cfeb; box-shadow: inset 0 1px 0 #dcebf8; }
.start { width: 86px; background: linear-gradient(90deg, #879db6, #8ca2ba); padding: 1px 0 0 14px; box-shadow: inset 0 1px 0 #c6d5e5; }
.tasks { display: flex; gap: 2px; }
.task { width: 76px; height: 55px; border: 1px solid #63788f; border-radius: 3px; background: linear-gradient(135deg, #dce9f5 0, #c5daef 45%, #b4cfe9 55%, #b5d0ea); box-shadow: inset 0 0 0 1px #e8f2fb; display: flex; align-items: center; justify-content: center; }
.task:first-child { background: linear-gradient(90deg, #98abbf, #d6e3ef 55%, #c6daee); }
.task.stacked { width: 71px; margin-right: 5px; box-shadow: inset 0 0 0 1px #e8f2fb, 4px 0 0 -1px #c5daef, 5px 0 0 -1px #63788f; }
.task.focus { background: linear-gradient(135deg, #f7fafd, #e2edf8 50%, #d5e4f4); }
.fz { width: 48px; height: 48px; background: linear-gradient(#c40000, #930000); outline: 2px dotted #a00000; outline-offset: -1px; color: #fff; font: italic 700 41px/42px "Liberation Sans", sans-serif; display: flex; padding-left: 6px; }
.fz .z { font-size: 37px; line-height: 49px; margin-left: -5px; }
.tray { margin-left: auto; display: flex; width: 356px; background: linear-gradient(90deg, #b1cfeb, #8ba0b8 34px, #8ba0b8); box-shadow: inset 0 1px 0 #d0e0f0; }
.tr-up { margin: 24px 0 0 45px; }
.tr-a { margin: 17px 0 0 23px; }
.tr-b { margin: 16px 0 0 13px; }
.tr-c { margin: 16px 0 0 10px; }
.tr-d { margin: 17px 0 0 10px; }
.clock { width: 112px; margin-left: 12px; margin-top: 4px; display: flex; flex-direction: column; align-items: center; color: #fff; font: 17.300px/26px "Noto Sans", sans-serif; }
.show-desktop { width: 15px; height: 55px; margin-left: auto; border: 1px solid #5b7188; box-shadow: inset 0 0 0 1px #b3c6d8; background: linear-gradient(160deg, #a2b5c9, #71889f 45%, #8fabc8 80%, #b3cde6); }
</style>
